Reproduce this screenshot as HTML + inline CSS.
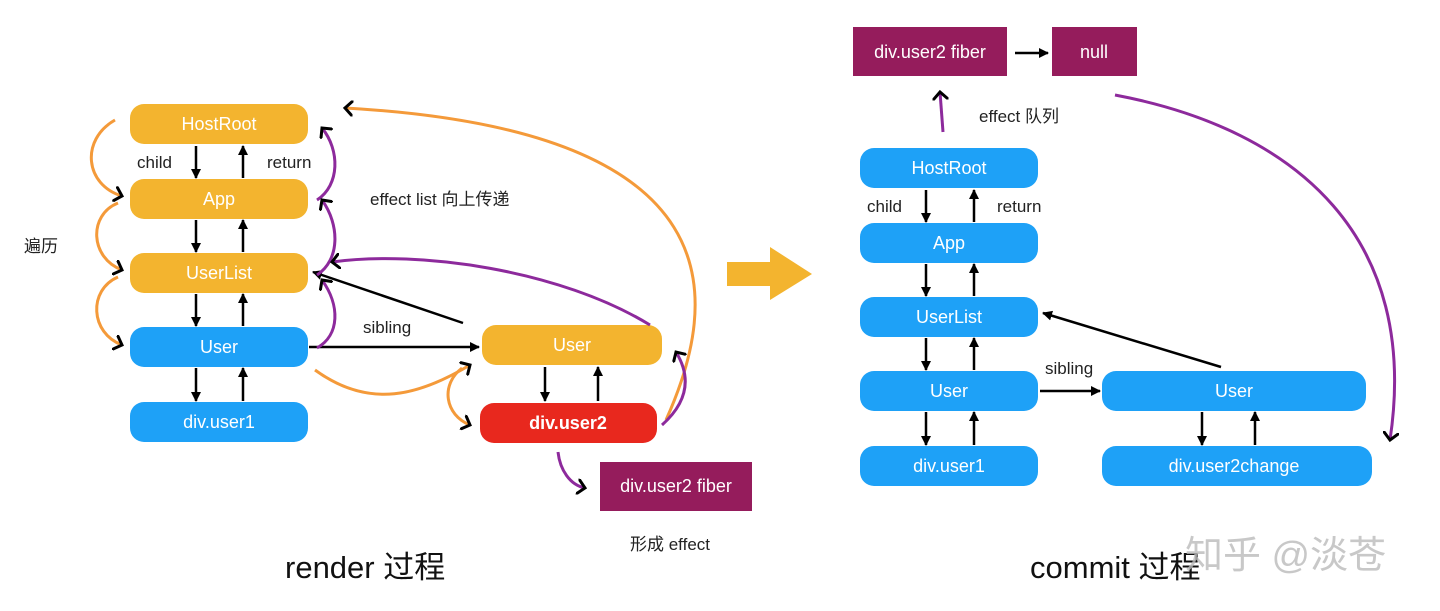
<!DOCTYPE html>
<html><head><meta charset="utf-8"><style>
body{margin:0;background:#fff;width:1440px;height:611px;overflow:hidden}
svg{display:block}
text{font-family:"Liberation Sans","Noto Sans CJK SC",sans-serif}
</style></head><body>
<svg width="1440" height="611" viewBox="0 0 1440 611" xmlns="http://www.w3.org/2000/svg">
<defs>
<marker id="ah" markerWidth="10" markerHeight="10" refX="9" refY="5" orient="auto" markerUnits="userSpaceOnUse"><path d="M0,0 L10,5 L0,10 z" fill="#000"/></marker>
<marker id="ah2" markerWidth="16" markerHeight="16" refX="8" refY="8" orient="auto" markerUnits="userSpaceOnUse"><path d="M0,0 L8,8 L0,16" fill="none" stroke="currentColor" stroke-width="3"/></marker>
</defs>
<g font-size="18" fill="#fff" text-anchor="middle">
<rect x="130" y="104" width="178" height="40" rx="14" fill="#f3b42f"/><text x="219" y="130">HostRoot</text>
<rect x="130" y="179" width="178" height="40" rx="14" fill="#f3b42f"/><text x="219" y="205">App</text>
<rect x="130" y="253" width="178" height="40" rx="14" fill="#f3b42f"/><text x="219" y="279">UserList</text>
<rect x="130" y="327" width="178" height="40" rx="14" fill="#1ea1f7"/><text x="219" y="353">User</text>
<rect x="130" y="402" width="178" height="40" rx="14" fill="#1ea1f7"/><text x="219" y="428">div.user1</text>
<rect x="482" y="325" width="180" height="40" rx="14" fill="#f3b42f"/><text x="572" y="351">User</text>
<rect x="480" y="403" width="177" height="40" rx="14" fill="#e8281e"/><text x="568" y="429" font-weight="bold">div.user2</text>
<rect x="600" y="462" width="152" height="49" fill="#951c5c"/><text x="676" y="492">div.user2 fiber</text>
<rect x="853" y="27" width="154" height="49" fill="#951c5c"/><text x="930" y="58">div.user2 fiber</text>
<rect x="1052" y="27" width="85" height="49" fill="#951c5c"/><text x="1094" y="58">null</text>
<rect x="860" y="148" width="178" height="40" rx="14" fill="#1ea1f7"/><text x="949" y="174">HostRoot</text>
<rect x="860" y="223" width="178" height="40" rx="14" fill="#1ea1f7"/><text x="949" y="249">App</text>
<rect x="860" y="297" width="178" height="40" rx="14" fill="#1ea1f7"/><text x="949" y="323">UserList</text>
<rect x="860" y="371" width="178" height="40" rx="14" fill="#1ea1f7"/><text x="949" y="397">User</text>
<rect x="860" y="446" width="178" height="40" rx="14" fill="#1ea1f7"/><text x="949" y="472">div.user1</text>
<rect x="1102" y="371" width="264" height="40" rx="14" fill="#1ea1f7"/><text x="1234" y="397">User</text>
<rect x="1102" y="446" width="270" height="40" rx="14" fill="#1ea1f7"/><text x="1234" y="472">div.user2change</text>
</g>
<g stroke="#000" stroke-width="2.5" marker-end="url(#ah)">
<line x1="196" y1="146" x2="196" y2="178"/><line x1="243" y1="178" x2="243" y2="146"/>
<line x1="196" y1="220" x2="196" y2="252"/><line x1="243" y1="252" x2="243" y2="220"/>
<line x1="196" y1="294" x2="196" y2="326"/><line x1="243" y1="326" x2="243" y2="294"/>
<line x1="196" y1="368" x2="196" y2="401"/><line x1="243" y1="401" x2="243" y2="368"/>
<line x1="545" y1="367" x2="545" y2="401"/><line x1="598" y1="401" x2="598" y2="367"/>
<line x1="309" y1="347" x2="479" y2="347"/>
<line x1="463" y1="323" x2="313" y2="272"/>
<line x1="926" y1="190" x2="926" y2="222"/><line x1="974" y1="222" x2="974" y2="190"/>
<line x1="926" y1="264" x2="926" y2="296"/><line x1="974" y1="296" x2="974" y2="264"/>
<line x1="926" y1="338" x2="926" y2="370"/><line x1="974" y1="370" x2="974" y2="338"/>
<line x1="926" y1="412" x2="926" y2="445"/><line x1="974" y1="445" x2="974" y2="412"/>
<line x1="1202" y1="412" x2="1202" y2="445"/><line x1="1255" y1="445" x2="1255" y2="412"/>
<line x1="1040" y1="391" x2="1100" y2="391"/>
<line x1="1221" y1="367" x2="1043" y2="313"/>
<line x1="1015" y1="53" x2="1048" y2="53"/>
</g>
<g fill="none" stroke="#f49a3a" stroke-width="3" color="#f49a3a">
<path d="M115,120 C80,140 85,185 122,196" marker-end="url(#ah2)"/>
<path d="M118,203 C88,215 90,258 122,270" marker-end="url(#ah2)"/>
<path d="M118,277 C88,290 90,333 122,345" marker-end="url(#ah2)"/>
<path d="M315,370 C370,410 420,395 470,365" marker-end="url(#ah2)"/>
<path d="M462,368 C440,385 445,415 470,425" marker-end="url(#ah2)"/>
<path d="M666,420 C720,300 740,130 345,108" marker-end="url(#ah2)"/>
</g>
<g fill="none" stroke="#8d2a9c" stroke-width="3" color="#8d2a9c">
<path d="M317,200 C340,185 340,150 322,128" marker-end="url(#ah2)"/>
<path d="M317,275 C340,260 340,225 322,200" marker-end="url(#ah2)"/>
<path d="M317,348 C340,335 340,305 322,280" marker-end="url(#ah2)"/>
<path d="M650,325 C560,270 420,250 332,262" marker-end="url(#ah2)"/>
<path d="M662,425 C690,400 690,375 676,352" marker-end="url(#ah2)"/>
<path d="M558,452 C560,470 570,485 585,488" marker-end="url(#ah2)"/>
<path d="M943,132 L940,92" marker-end="url(#ah2)"/>
<path d="M1115,95 C1300,130 1420,240 1390,440" marker-end="url(#ah2)"/>
</g>
<polygon points="727,262 770,262 770,247 812,274 770,300 770,286 727,286" fill="#f3b42f"/>
<g font-size="17" fill="#222">
<text x="137" y="168">child</text><text x="267" y="168">return</text>
<text x="370" y="205">effect list 向上传递</text>
<text x="24" y="252">遍历</text>
<text x="363" y="333">sibling</text>
<text x="630" y="550">形成 effect</text>
<text x="867" y="212">child</text><text x="997" y="212">return</text>
<text x="979" y="122">effect 队列</text>
<text x="1045" y="374">sibling</text>
</g>
<text x="285" y="578" font-size="31" fill="#111">render 过程</text>
<text x="1030" y="578" font-size="31" fill="#111">commit 过程</text>
<text x="1185" y="568" font-size="38" fill="#bbb" opacity="0.8">知乎 @淡苍</text>
</svg>
</body></html>
